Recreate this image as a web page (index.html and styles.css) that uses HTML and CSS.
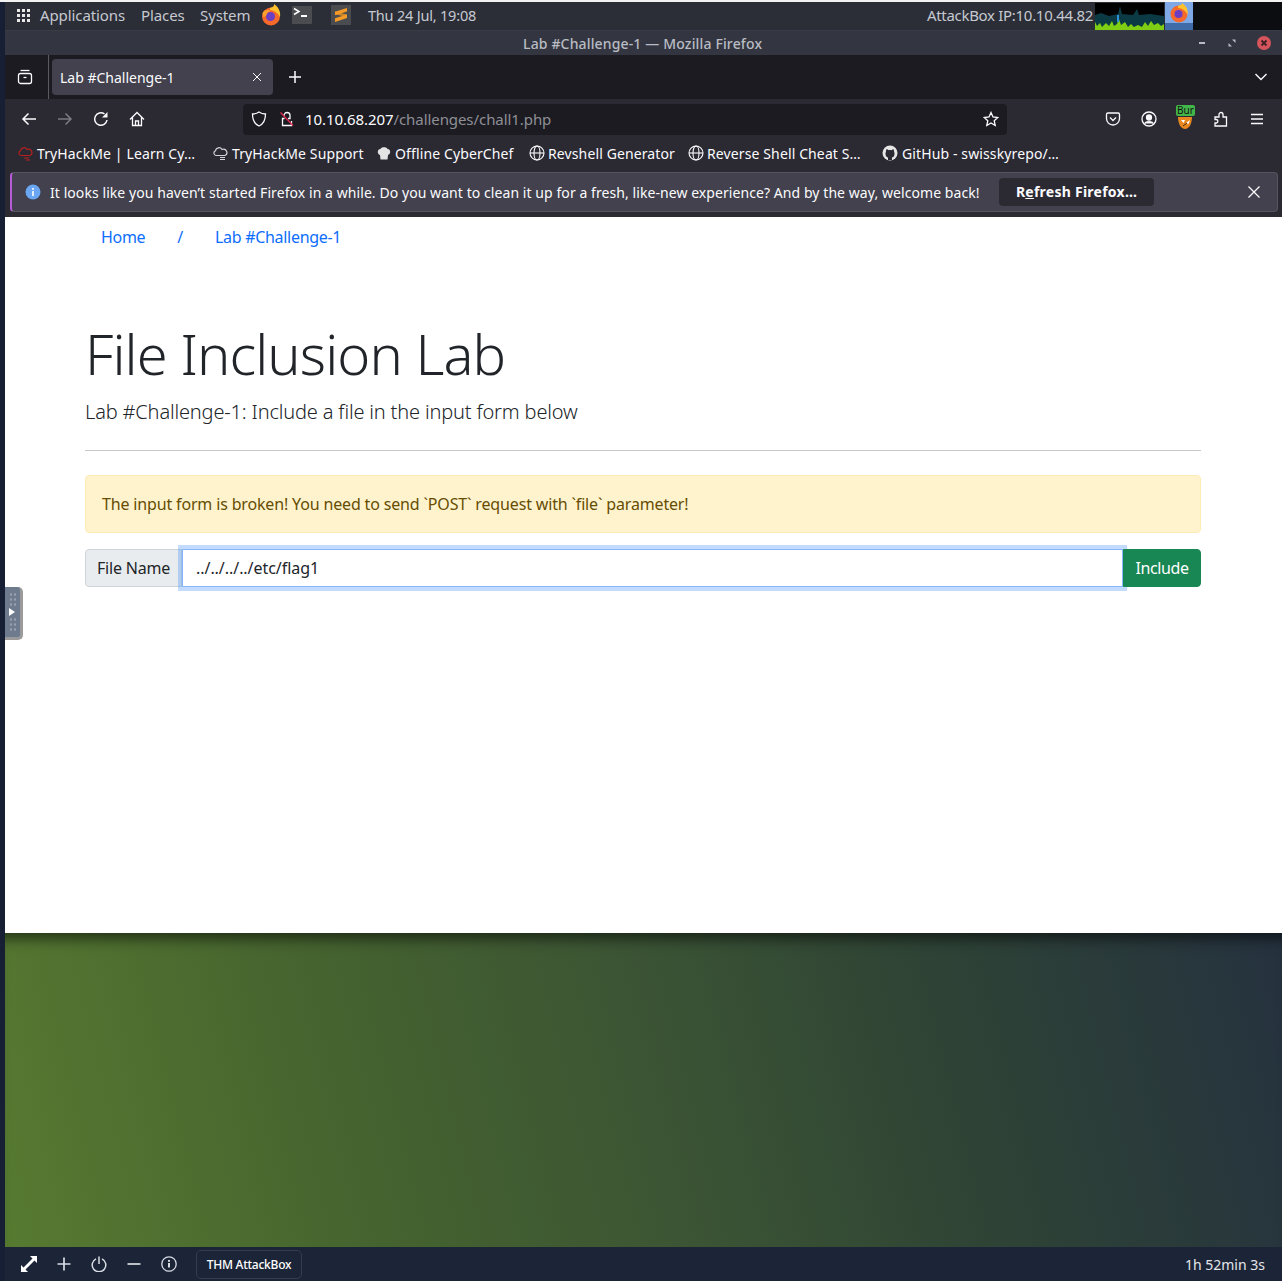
FILE: index.html
```html
<!DOCTYPE html>
<html lang="en">
<head>
    <meta charset="UTF-8">
    <meta name="viewport" content="width=device-width, initial-scale=1.0">
    <title>Lab #Challenge-1</title>
    <link rel="stylesheet" href="styles.css">
</head>
<body>
    <div class="desktop-edge"></div>

    <!-- gnome panel -->
    <div class="panel">
        <svg class="apps-grid" width="16" height="16" viewBox="0 0 16 16" fill="#e8e8e8">
            <rect x="1" y="1" width="3" height="3"/><rect x="6" y="1" width="3" height="3"/><rect x="11" y="1" width="3" height="3"/>
            <rect x="1" y="6" width="3" height="3"/><rect x="6" y="6" width="3" height="3"/><rect x="11" y="6" width="3" height="3"/>
            <rect x="1" y="11" width="3" height="3"/><rect x="6" y="11" width="3" height="3"/><rect x="11" y="11" width="3" height="3"/>
        </svg>
        <span class="panel-item panel-apps">Applications</span>
        <span class="panel-item panel-places">Places</span>
        <span class="panel-item panel-system">System</span>
        <svg class="panel-fox" width="20" height="22" viewBox="0 0 20 22">
            <circle cx="10" cy="12.500" r="9" fill="#f5692c"/>
            <path d="M9 4 C12 3 13.500 2 13 0 C17.500 3 20 8 19 13 C17 9 13 6 9 6 Z" fill="#ffc12e"/>
            <circle cx="9.500" cy="12.500" r="4.500" fill="#6a3fc4"/>
            <path d="M1.500 9 C3 6 7 5 10 7 C7.500 7.500 5.500 9 5 12 L2 13 Z" fill="#ffa02e"/>
        </svg>
        <span class="term-icon">
            <svg width="20" height="18" viewBox="0 0 20 18" fill="none" stroke="#fff" stroke-width="1.500">
                <path d="M2 2.500 L7 5.500 L2 8.500"/><path d="M9 10 H15" stroke-width="2"/>
            </svg>
        </span>
        <span class="sublime-icon">
            <svg width="12" height="14" viewBox="0 0 12 14" fill="#f59b25">
                <path d="M0 3.800 L12 0 V3.500 L0 7.300 Z"/><path d="M0 6 L12 9.500 V6.500 L0 3.500 Z" opacity=".75"/><path d="M0 10.300 L12 6.500 V10 L0 14 Z"/>
            </svg>
        </span>
        <span class="panel-item panel-clock">Thu 24 Jul, 19:08</span>
        <span class="panel-item panel-ip">AttackBox IP:10.10.44.82</span>
        <svg class="cpu-graph" width="69" height="27" viewBox="0 0 69 27">
            <rect width="69" height="27" fill="#000"/>
            <path d="M0 12 L6 10 L14 13 L23 11 L25 3 L27 11 L38 12 L42 6 L44 12 L55 11 L69 13 V27 H0 Z" fill="#0b3a44"/>
            <path d="M0 27 V19 L2 23 L5 20 L7 24 L11 20 L14 23 L17 18 L19 23 L22 21 L24 16 L26 22 L30 19 L33 24 L36 21 L39 24 L43 22 L47 24 L50 19 L53 23 L56 18 L59 22 L63 20 L66 23 L69 21 V27 Z" fill="#7fce13"/>
            <rect x="22" y="12" width="2" height="7" fill="#2e90d8"/>
        </svg>
        <span class="task-fox">
            <svg width="20" height="20" viewBox="0 0 20 20">
                <circle cx="10" cy="11" r="8.500" fill="#f5692c"/>
                <path d="M9 3 C12 2 13.500 1 13 0 C17.500 3 19.500 7 18.500 12 C17 8 13 5 9 5 Z" fill="#ffc12e"/>
                <circle cx="9.500" cy="11" r="4" fill="#6a3fc4"/>
            </svg>
        </span>
        <div class="panel-empty"></div>
    </div>

    <!-- window title -->
    <div class="titlebar">
        <span class="title-text">Lab #Challenge-1 — Mozilla Firefox</span>
        <div class="win-buttons">
            <svg width="10" height="10" viewBox="0 0 10 10"><rect x="2" y="4" width="6" height="2" fill="#b9bcc4"/></svg>
            <svg width="10" height="10" viewBox="0 0 10 10" fill="#b9bcc4"><path d="M5 1.500 H8.500 V5 Z"/><path d="M1.500 5 V8.500 H5 Z"/></svg>
            <svg class="win-close" width="14" height="14" viewBox="0 0 14 14"><circle cx="7" cy="7" r="7" fill="#d6545c"/><path d="M4.500 4.500 L9.500 9.500 M9.500 4.500 L4.500 9.500" stroke="#3c2226" stroke-width="1.800"/></svg>
        </div>
    </div>

    <!-- tabs -->
    <div class="tabbar">
        <div class="tab-view">
            <svg width="16" height="16" viewBox="0 0 16 16" fill="none" stroke="#fbfbfe" stroke-width="1.300">
                <rect x="1.500" y="4.500" width="13" height="10" rx="2"/><path d="M3.500 1.500 H12.500"/><path d="M6.500 8.500 H9.500"/>
            </svg>
        </div>
        <div class="tab">
            <span class="tab-label">Lab #Challenge-1</span>
            <svg width="10" height="10" viewBox="0 0 10 10" stroke="#fbfbfe" stroke-width="1"><path d="M1 1 L9 9 M9 1 L1 9"/></svg>
        </div>
        <svg class="tab-new" width="14" height="14" viewBox="0 0 14 14" stroke="#fbfbfe" stroke-width="1.500"><path d="M7 1 V13 M1 7 H13"/></svg>
        <svg class="tab-list" width="14" height="14" viewBox="0 0 14 14" fill="none" stroke="#fbfbfe" stroke-width="1.400"><path d="M1.500 4 L7 9.500 L12.500 4"/></svg>
    </div>

    <!-- url bar -->
    <div class="navbar">
        <div class="nav-buttons">
            <svg width="16" height="16" viewBox="0 0 16 16" fill="none" stroke="#fbfbfe" stroke-width="1.500"><path d="M15 8 H2 M7.500 2.500 L2 8 L7.500 13.500"/></svg>
            <svg width="16" height="16" viewBox="0 0 16 16" fill="none" stroke="#7b7a80" stroke-width="1.500"><path d="M1 8 H14 M8.500 2.500 L14 8 L8.500 13.500"/></svg>
            <svg width="16" height="16" viewBox="0 0 16 16" fill="none" stroke="#fbfbfe" stroke-width="1.500"><path d="M14 9 A6.200 6.200 0 1 1 11.500 3"/><path d="M14.500 1 V6.500 H9 Z" fill="#fbfbfe" stroke="none"/></svg>
            <svg width="16" height="16" viewBox="0 0 16 16" fill="none" stroke="#fbfbfe" stroke-width="1.300"><path d="M1 8.500 L8 1.500 L15 8.500 M3.500 6.500 V14.500 H12.500 V6.500"/><path d="M6.500 14.500 V10 H9.500 V14.500"/></svg>
        </div>
        <div class="urlbar">
            <svg width="16" height="16" viewBox="0 0 16 16" fill="none" stroke="#fbfbfe" stroke-width="1.300"><path d="M8 1 C10 2.500 12 3 14.500 3 C14.500 9 12.500 13 8 15 C3.500 13 1.500 9 1.500 3 C4 3 6 2.500 8 1 Z"/></svg>
            <svg class="lock" width="16" height="16" viewBox="0 0 16 16" fill="none" stroke="#fbfbfe" stroke-width="1.300"><path d="M5.500 7.500 H3.500 V14.500 H12.500 V10"/><path d="M5 5 V4.500 A3 3 0 0 1 11 4.500 V7.500 H9"/><path d="M1.500 1.500 L14 14.500" stroke="#e22850" stroke-width="1.300"/></svg>
            <span class="url-text"><span class="url-host">10.10.68.207</span>/challenges/chall1.php</span>
            <svg width="16" height="16" viewBox="0 0 16 16" fill="none" stroke="#fbfbfe" stroke-width="1.300"><path d="M8 1.500 L10 6 L14.800 6.500 L11.200 9.700 L12.200 14.500 L8 12 L3.800 14.500 L4.800 9.700 L1.200 6.500 L6 6 Z"/></svg>
        </div>
        <div class="nav-tools">
            <svg width="16" height="16" viewBox="0 0 16 16" fill="none" stroke="#fbfbfe" stroke-width="1.300"><path d="M1.500 3.500 A1.500 1.500 0 0 1 3 2 H13 A1.500 1.500 0 0 1 14.500 3.500 V7.500 A6.500 6.500 0 0 1 1.500 7.500 Z"/><path d="M5 6.500 L8 9.500 L11 6.500"/></svg>
            <svg width="16" height="16" viewBox="0 0 16 16" fill="none" stroke="#fbfbfe" stroke-width="1.300"><circle cx="8" cy="8" r="7"/><circle cx="8" cy="6.500" r="2.500" fill="#fbfbfe"/><path d="M3.500 12.500 C5 10 11 10 12.500 12.500" fill="#fbfbfe"/></svg>
            <span class="burp">
                <svg class="burp-fox" width="16" height="12" viewBox="0 0 16 12"><path d="M1 0 H15 C15 7 12 12 8 12 C4 12 1 7 1 0 Z" fill="#e8861f"/><path d="M4 3 H8 L6.500 6 Z M9 6 L13 3 L11.500 7 Z" fill="#fff"/><path d="M6 9 L10 6" stroke="#4a2b10"/></svg>
                <span class="burp-badge">Bur</span>
            </span>
            <svg width="16" height="16" viewBox="0 0 16 16" fill="none" stroke="#fbfbfe" stroke-width="1.300"><path d="M2 6 H6 V3.500 A2 2 0 0 1 10 3.500 V6 H13.500 V15 H2 V12 H3.500 A1.800 1.800 0 0 0 3.500 8.500 H2 Z"/></svg>
            <svg width="16" height="16" viewBox="0 0 16 16" stroke="#fbfbfe" stroke-width="1.300"><path d="M2 3.500 H14 M2 8 H14 M2 12.500 H14"/></svg>
        </div>
    </div>

    <!-- bookmarks -->
    <div class="bookmarks">
        <span class="bookmark bm-1">
            <svg width="16" height="16" viewBox="0 0 16 16" fill="none" stroke="#b5201f" stroke-width="1.200"><path d="M4 10.500 A2.500 2.500 0 0 1 3.500 5.700 A3.500 3.500 0 0 1 10 4.500 A3 3 0 0 1 13 10.500 Z"/><path d="M7 13 H12 M9 15 H13"/></svg>
            <span class="bm-text">TryHackMe | Learn Cy…</span>
        </span>
        <span class="bookmark bm-2">
            <svg width="16" height="16" viewBox="0 0 16 16" fill="none" stroke="#d4d4d8" stroke-width="1.200"><path d="M4 10.500 A2.500 2.500 0 0 1 3.500 5.700 A3.500 3.500 0 0 1 10 4.500 A3 3 0 0 1 13 10.500 Z"/><path d="M8 12.500 H13 M8 14.500 H13"/></svg>
            <span class="bm-text">TryHackMe Support</span>
        </span>
        <span class="bookmark bm-3">
            <svg width="16" height="16" viewBox="0 0 16 16" fill="#e4e4e4"><path d="M4 10 C1 9 1 4 4.500 4 C5 1.500 11 1.500 11.500 4 C15 4 15 9 12 10 L11.500 14.500 H4.500 Z"/></svg>
            <span class="bm-text">Offline CyberChef</span>
        </span>
        <span class="bookmark bm-4">
            <svg class="globe" width="16" height="16" viewBox="0 0 16 16" fill="none" stroke="#fbfbfe" stroke-width="1.100"><circle cx="8" cy="8" r="7"/><ellipse cx="8" cy="8" rx="3" ry="7"/><path d="M1 8 H15"/></svg>
            <span class="bm-text">Revshell Generator</span>
        </span>
        <span class="bookmark bm-5">
            <svg class="globe" width="16" height="16" viewBox="0 0 16 16" fill="none" stroke="#fbfbfe" stroke-width="1.100"><circle cx="8" cy="8" r="7"/><ellipse cx="8" cy="8" rx="3" ry="7"/><path d="M1 8 H15"/></svg>
            <span class="bm-text">Reverse Shell Cheat S…</span>
        </span>
        <span class="bookmark bm-6">
            <svg width="16" height="16" viewBox="0 0 16 16"><circle cx="8" cy="8" r="7.500" fill="#e6e6e6"/><path d="M6 15 V12.500 C4 12 3.500 10.500 3.500 8.500 C3.500 7.500 4 7 4 6 C4 5.200 4.200 4.500 4.500 4.300 C5.200 4.300 6 4.800 6.500 5.200 C7.500 5 8.500 5 9.500 5.200 C10 4.800 10.800 4.300 11.500 4.300 C11.800 4.500 12 5.200 12 6 C12 7 12.500 7.500 12.500 8.500 C12.500 10.500 12 12 10 12.500 V15 Z" fill="#2b2a33"/></svg>
            <span class="bm-text">GitHub - swisskyrepo/…</span>
        </span>
    </div>

    <!-- refresh notification -->
    <div class="notice-wrap">
        <div class="notice">
            <svg class="notice-info" width="16" height="16" viewBox="0 0 16 16"><circle cx="8" cy="8" r="7.500" fill="#6ba6f2"/><rect x="7.200" y="7" width="1.600" height="5" fill="#fff"/><rect x="7.200" y="4" width="1.600" height="1.800" fill="#fff"/></svg>
            <span class="notice-text">It looks like you haven’t started Firefox in a while. Do you want to clean it up for a fresh, like-new experience? And by the way, welcome back!</span>
            <span class="notice-btn">R<u>e</u>fresh Firefox…</span>
            <svg class="notice-close" width="12" height="12" viewBox="0 0 12 12" stroke="#fbfbfe" stroke-width="1.300"><path d="M0.500 0.500 L11.500 11.500 M11.500 0.500 L0.500 11.500"/></svg>
        </div>
    </div>

    <!-- the page itself -->
    <div class="page">
        <ul class="crumbs">
            <li><a href="#">Home</a></li>
            <li class="crumb-sep">/</li>
            <li><a href="#">Lab #Challenge-1</a></li>
        </ul>
        <div class="content">
            <h1>File Inclusion Lab</h1>
            <p class="lead">Lab #Challenge-1: Include a file in the input form below</p>
            <hr>
            <div class="alert">The input form is broken! You need to send `POST` request with `file` parameter!</div>
            <form class="input-group">
                <span class="input-label">File Name</span>
                <input class="file-input" type="text" value="../../../../etc/flag1">
                <button class="include-btn" type="button">Include</button>
            </form>
        </div>
    </div>

    <!-- wallpaper -->
    <div class="wallpaper"></div>

    <!-- attackbox footer -->
    <div class="footer">
        <div class="footer-icons">
            <svg class="footer-expand" width="18" height="18" viewBox="0 0 18 18" fill="#fff"><path d="M10 1 H17 V8 L14.500 5.500 L5.500 14.500 L8 17 H1 V10 L3.500 12.500 L12.500 3.500 Z"/></svg>
            <svg width="16" height="16" viewBox="0 0 16 16" stroke="#d8dce3" stroke-width="1.700"><path d="M8 1.500 V14.500 M1.500 8 H14.500"/></svg>
            <svg width="16" height="16" viewBox="0 0 16 16" fill="none" stroke="#d8dce3" stroke-width="1.500"><path d="M5 2.800 A6.800 6.800 0 1 0 11 2.800"/><path d="M8 0.500 V8"/></svg>
            <svg width="16" height="16" viewBox="0 0 16 16" stroke="#d8dce3" stroke-width="1.700"><path d="M1.500 8 H14.500"/></svg>
            <svg width="16" height="16" viewBox="0 0 16 16" fill="none" stroke="#d8dce3" stroke-width="1.300"><circle cx="8" cy="8" r="7.200"/><rect x="7" y="7" width="2" height="4.500" fill="#d8dce3" stroke="none"/><rect x="7" y="4" width="2" height="1.800" fill="#d8dce3" stroke="none"/></svg>
        </div>
        <span class="footer-tab">THM AttackBox</span>
        <span class="footer-time">1h 52min 3s</span>
    </div>

    <!-- noVNC side handle -->
    <div class="vnc-handle">
        <span class="vnc-dots"></span>
        <svg width="6" height="8" viewBox="0 0 6 8" fill="#fff"><path d="M0 0 L6 4 L0 8 Z"/></svg>
        <span class="vnc-dots"></span>
    </div>
</body>
</html>
```

FILE: styles.css
```css
* { box-sizing: border-box; }
html, body { margin: 0; padding: 0; }
body {
    height: 1281px;
    width: 1282px;
    overflow: hidden;
    position: relative;
    display: flex;
    flex-direction: column;
    padding-left: 5px;
    padding-top: 2px;
    background-color: #f2f2f2;
    font-family: "Noto Sans", sans-serif;
    font-size: 14px;
}
svg { display: block; flex-shrink: 0; }

.desktop-edge {
    position: absolute;
    left: 0;
    top: 2px;
    bottom: 0;
    width: 5px;
    background-color: #161f33;
}

/* panel */
.panel {
    height: 28px;
    margin-left: -5px;
    padding-left: 16px;
    display: flex;
    align-items: center;
    background-color: #2b2e37;
    color: #c6c9d0;
}
.panel-item {
    margin-bottom: 2px;
    font-size: 15px;
    white-space: nowrap;
    letter-spacing: -0.1px;
}
.panel-apps { margin-left: 8px; width: 101px; }
.panel-places { width: 59px; }
.panel-system { width: 61px; }
.panel-fox { margin-bottom: 2px; }
.term-icon {
    width: 20px;
    height: 18px;
    margin-left: 11px;
    margin-bottom: 2px;
    background-color: #4a4c50;
    border-radius: 1px;
}
.sublime-icon {
    width: 20px;
    height: 20px;
    margin-left: 19px;
    margin-bottom: 2px;
    padding: 3px 4px;
    background-color: #4a4c50;
}
.panel-clock { margin-left: 17px; width: 558px; font-size: 14.500px; letter-spacing: -0.2px; }
.panel-ip { width: 167px; text-align: right; letter-spacing: -0.3px; }
.cpu-graph { margin-left: 2px; }
.task-fox {
    width: 28px;
    height: 28px;
    margin-left: 1px;
    padding: 1px 4px;
    background: linear-gradient(#7ea9e6 0 21px, #3f6ca8 21px);
}
.panel-empty { flex: 1; align-self: stretch; background-color: #0c0d11; }

/* title bar */
.titlebar {
    height: 25px;
    padding-left: 518px;
    display: flex;
    align-items: center;
    background-color: #333640;
    border-top: 1px solid #393c46;
    color: #b9bcc4;
}
.title-text {
    font-size: 14px;
    font-weight: 500;
    letter-spacing: 0.15px;
    white-space: nowrap;
}
.win-buttons { margin-left: auto; display: flex; align-items: center; gap: 20px; padding-right: 11px; }

/* tabs */
.tabbar {
    height: 44px;
    display: flex;
    align-items: center;
    background-color: #1c1b22;
}
.tab-view {
    width: 44px;
    height: 44px;
    padding-left: 12px;
    display: flex;
    align-items: center;
    border-right: 1px solid #5c5b62;
}
.tab {
    width: 221px;
    height: 36px;
    margin-left: 3px;
    padding: 0 11px 0 8px;
    display: flex;
    align-items: center;
    justify-content: space-between;
    background-color: #42414d;
    border-radius: 4px;
    color: #fbfbfe;
}
.tab-label { font-size: 14px; }
.tab-new { margin-left: 15px; }
.tab-list { margin-left: auto; margin-right: 14px; }

/* nav */
.navbar {
    height: 40px;
    display: flex;
    align-items: center;
    background-color: #2b2a33;
}
.nav-buttons { display: flex; gap: 20px; padding-left: 16px; width: 238px; }
.urlbar {
    width: 764px;
    height: 31px;
    padding: 0 8px;
    display: flex;
    align-items: center;
    background-color: #1c1b22;
    border-radius: 4px;
}
.urlbar .lock { margin-left: 12px; }
.url-text {
    flex: 1;
    margin-left: 10px;
    font-size: 15px;
    letter-spacing: -0.07px;
    color: #8f8f96;
}
.url-host { color: #fbfbfe; }
.nav-tools {
    display: flex;
    align-items: center;
    gap: 20px;
    padding-left: 98px;
}
.burp { position: relative; width: 16px; height: 16px; }
.burp-fox { position: absolute; top: 6px; left: 0; }
.burp-badge {
    position: absolute;
    top: -6px;
    left: -1px;
    width: 19px;
    height: 11px;
    background-color: #43b649;
    border-radius: 2px;
    color: #111;
    font-size: 10px;
    line-height: 11px;
    text-align: center;
}

/* bookmarks */
.bookmarks {
    height: 28px;
    display: flex;
    align-items: center;
    padding-left: 12px;
    background-color: #2b2a33;
    color: #fbfbfe;
    font-size: 14px;
    letter-spacing: 0.12px;
}
.bookmark { display: flex; align-items: center; gap: 4px; white-space: nowrap; }
.bm-1 { width: 195px; }
.bm-2 { width: 164px; }
.bm-3 { width: 153px; }
.bm-4 { width: 159px; }
.bm-5 { width: 194px; }
.bm-3 svg { margin-right: -1px; }
.globe { margin-right: -1px; }

/* notification */
.notice-wrap {
    height: 50px;
    padding: 5px 4px 5px 5px;
    background-color: #2b2a33;
}
.notice {
    height: 40px;
    display: flex;
    align-items: center;
    padding-left: 13px;
    background-color: #42414d;
    border: 1px solid #55545f;
    border-left: 2px solid #b45cd6;
    border-radius: 4px;
    color: #fbfbfe;
}
.notice-text {
    margin-left: 9px;
    width: 949px;
    font-size: 14px;
    letter-spacing: 0.07px;
    white-space: nowrap;
}
.notice-btn {
    width: 155px;
    height: 28px;
    line-height: 28px;
    text-align: center;
    background-color: #2b2a33;
    border-radius: 4px;
    font-size: 14px;
    font-weight: 700;
    letter-spacing: 0.25px;
}
.notice-close { margin-left: 94px; }

/* page */
.page {
    height: 716px;
    background-color: #fff;
    color: #212529;
}
.crumbs {
    display: flex;
    margin: 0;
    padding: 8px 0 0 80px;
    list-style: none;
    font-size: 16px;
    line-height: 24px;
    letter-spacing: -0.3px;
}
.crumbs li { padding: 0 16px; }
.crumbs a { color: #0d6efd; text-decoration: none; }
.crumbs .crumb-sep { color: #0d6efd; }
.content { width: 1116px; margin-left: 80px; }
h1 {
    margin: 71px 0 0;
    font-size: 56px;
    font-weight: 300;
    line-height: 67px;
    letter-spacing: -0.9px;
}
.lead {
    margin: 10px 0 0;
    font-size: 20px;
    font-weight: 300;
    line-height: 30px;
    letter-spacing: -0.16px;
}
hr {
    margin: 23px 0 24px;
    border: 0;
    border-top: 1px solid #c8c9ca;
}
.alert {
    height: 58px;
    padding: 0 16px;
    display: flex;
    align-items: center;
    background-color: #fff3cd;
    border: 1px solid #ffecb5;
    border-radius: 4px;
    color: #664d03;
    font-size: 16px;
    letter-spacing: -0.16px;
}
.input-group {
    display: flex;
    height: 38px;
    margin-top: 16px;
    font-size: 16px;
}
.input-label {
    width: 97px;
    display: flex;
    align-items: center;
    justify-content: center;
    background-color: #e9ecef;
    border: 1px solid #ced4da;
    border-radius: 4px 0 0 4px;
    letter-spacing: -0.2px;
}
.file-input {
    flex: 1;
    min-width: 0;
    padding: 0 13px;
    border: 1px solid #86b7fe;
    box-shadow: 0 0 0 4px rgba(13, 110, 253, 0.25);
    outline: 0;
    color: #212529;
    font-family: inherit;
    font-size: 16px;
    letter-spacing: -0.05px;
}
.include-btn {
    width: 78px;
    position: relative;
    background-color: #198754;
    border: 1px solid #198754;
    border-radius: 0 4px 4px 0;
    color: #fff;
    font-family: inherit;
    font-size: 16px;
    letter-spacing: -0.4px;
}

/* wallpaper */
.wallpaper {
    flex: 1;
    background: linear-gradient(76deg, #577a31 0%, #45632f 28%, #3c5534 50%, #2f4435 72%, #25323f 100%);
    box-shadow: inset 0 16px 14px -10px rgba(0, 0, 0, 0.55);
}

/* footer */
.footer {
    height: 34px;
    display: flex;
    align-items: center;
    background-color: #1c2538;
    color: #fff;
}
.footer-icons { display: flex; align-items: center; gap: 19px; padding-left: 15px; }
.footer-expand { margin-right: -1px; }
.footer-tab {
    width: 106px;
    height: 29px;
    margin-left: 19px;
    display: flex;
    align-items: center;
    justify-content: center;
    border: 1px solid #333d52;
    border-radius: 5px;
    font-size: 12px;
    font-weight: 500;
    letter-spacing: -0.25px;
}
.footer-time {
    margin-left: auto;
    padding-right: 17px;
    font-size: 14px;
    color: #e4e6ea;
}

/* vnc control handle */
.vnc-handle {
    position: absolute;
    left: 5px;
    top: 587px;
    width: 18px;
    height: 53px;
    padding: 5px 0 5px 4px;
    display: flex;
    flex-direction: column;
    align-items: flex-start;
    justify-content: space-between;
    background-color: #6e7b8e;
    border-radius: 0 5px 5px 0;
    border-right: 3px solid #9a9a9a;
    border-bottom: 3px solid #9a9a9a;
}
.vnc-dots {
    width: 8px;
    height: 15px;
    background-image: radial-gradient(circle, #98a2b0 1px, transparent 1.300px);
    background-size: 4px 5px;
}
```
